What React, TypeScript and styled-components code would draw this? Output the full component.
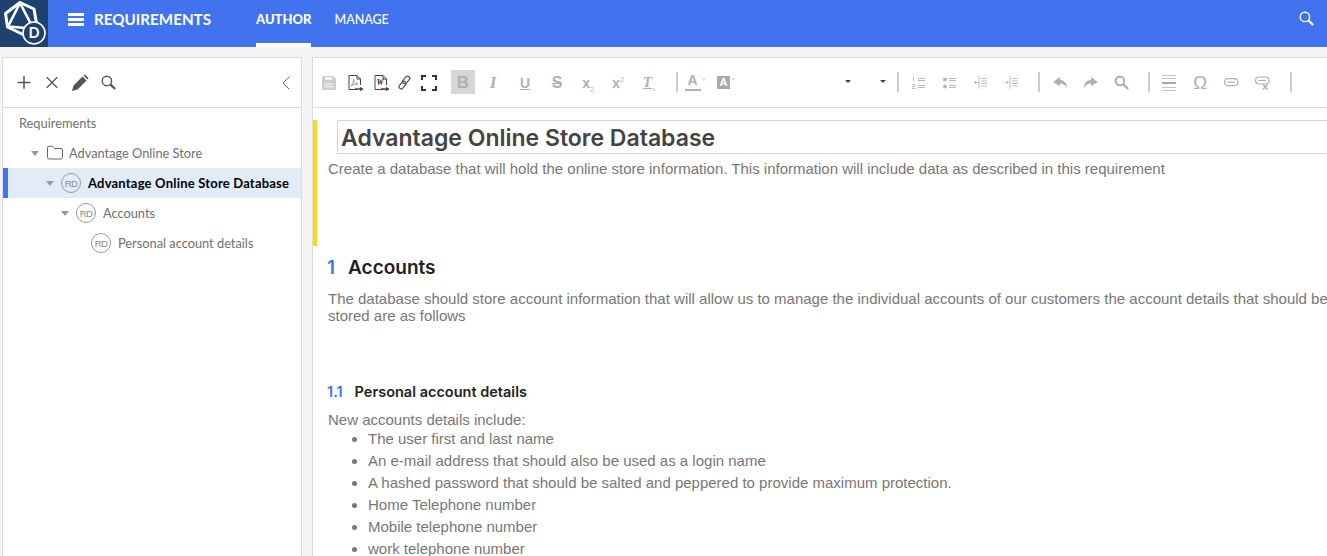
import React from 'react';
import styled, { createGlobalStyle } from 'styled-components';
import { Plus, X, ChevronLeft, Folder } from 'lucide-react';

const GlobalStyle = createGlobalStyle`
  html, body { margin: 0; padding: 0; height: 100%; overflow: hidden; background: #f5f5f5; }
  body { font-family: "Lato", "Liberation Sans", sans-serif; }
`;

const Page = styled.div`
  width: 1327px;
  height: 556px;
  overflow: hidden;
  display: flex;
  flex-direction: column;
`;

const Header = styled.header`
  height: 47px;
  flex: none;
  background: #4173ee;
  display: flex;
  align-items: center;
  color: #fff;
`;

const LogoBox = styled.div`
  width: 48px;
  height: 47px;
  background: #1f4170;
  flex: none;
`;

const MenuButton = styled.div`
  margin-left: 20px;
  width: 16px;
  display: flex;
  flex-direction: column;
  gap: 2px;
  padding-bottom: 8px;

  span {
    height: 3px;
    background: #fff;
  }
`;

const AppTitle = styled.div`
  margin-left: 10px;
  width: 162px;
  padding-bottom: 9px;
  font-size: 15.2px;
  font-weight: 700;
`;

const NavItem = styled.div<{ $active?: boolean }>`
  height: 47px;
  box-sizing: border-box;
  margin-right: 23px;
  font-size: ${(p) => (p.$active ? 13 : 12.5)}px;
  font-weight: ${(p) => (p.$active ? 900 : 500)};
  line-height: 39px;
  border-bottom: 4px solid ${(p) => (p.$active ? '#fff' : 'transparent')};
`;

const HeaderSearch = styled.div`
  margin-left: auto;
  margin-right: 13px;
  display: flex;
  padding-bottom: 11px;
`;

const Body = styled.main`
  flex: 1;
  display: flex;
  padding: 10px 0 0 2px;
  gap: 10px;
  min-height: 0;
`;

const TreePanel = styled.aside`
  width: 300px;
  flex: none;
  box-sizing: border-box;
  background: #fff;
  border: 1px solid #dcdcdc;
  border-bottom: 0;
`;

const TreeToolbar = styled.div`
  height: 50px;
  box-sizing: border-box;
  border-bottom: 1px solid #dcdcdc;
  display: flex;
  align-items: center;
  padding: 0 3px 0 11px;
  gap: 8px;
  color: #555;
`;

const TreeIcon = styled.span`
  width: 20px;
  display: flex;
  justify-content: center;
`;

const Collapse = styled.span`
  margin-left: auto;
  display: flex;
  color: #666;
`;

const Row = styled.div<{ $depth: number; $selected?: boolean }>`
  height: 30px;
  box-sizing: border-box;
  display: flex;
  align-items: center;
  padding-left: ${(p) => p.$depth}px;
  background: ${(p) => (p.$selected ? '#e2ecf9' : 'transparent')};
  border-left: 5px solid ${(p) => (p.$selected ? '#4173ee' : 'transparent')};
  font-size: ${(p) => (p.$selected ? 13 : 12.8)}px;
  letter-spacing: ${(p) => (p.$selected ? 0.2 : 0)}px;
  color: ${(p) => (p.$selected ? '#000' : '#707070')};
  font-weight: ${(p) => (p.$selected ? 700 : 400)};
`;

const Caret = styled.span`
  width: 0;
  height: 0;
  border-left: 4px solid transparent;
  border-right: 4px solid transparent;
  border-top: 5px solid #999;
  margin-right: 7px;
  flex: none;
`;

const Badge = styled.span`
  width: 20px;
  height: 20px;
  box-sizing: border-box;
  border: 1px solid #999;
  border-radius: 50%;
  display: flex;
  align-items: center;
  justify-content: center;
  margin-right: 7px;
  flex: none;
  font-family: "Liberation Sans", sans-serif;
  font-size: 9.5px;
  font-weight: 400;
  letter-spacing: -0.5px;
  color: #888;
`;

const FolderIcon = styled.span`
  display: flex;
  width: 18px;
  margin-right: 5px;
  color: #555;
`;

const EditorPanel = styled.section`
  width: 1100px;
  flex: none;
  background: #fff;
  border-left: 1px solid #dcdcdc;
  border-top: 1px solid #dcdcdc;
`;

const EditorToolbar = styled.div`
  height: 50px;
  box-sizing: border-box;
  border-bottom: 1px solid #dcdcdc;
  padding-bottom: 2px;
  display: flex;
  align-items: center;
`;

const Tool = styled.span<{ $ml: number; $active?: boolean; $dark?: boolean }>`
  width: 24px;
  height: 24px;
  box-sizing: border-box;
  padding-top: 2px;
  flex: none;
  margin-left: ${(p) => p.$ml}px;
  display: flex;
  align-items: center;
  justify-content: center;
  background: ${(p) => (p.$active ? '#d6d6d6' : 'transparent')};
  color: ${(p) => (p.$dark ? '#444' : '#b0b0b0')};
  font-family: "Liberation Sans", sans-serif;
`;

const Divider = styled.span<{ $ml: number }>`
  width: 2px;
  height: 20px;
  flex: none;
  background: #ccc;
  margin-left: ${(p) => p.$ml}px;
`;

const DropArrow = styled.span<{ $ml: number }>`
  width: 0;
  height: 0;
  flex: none;
  margin-left: ${(p) => p.$ml}px;
  border-left: 3px solid transparent;
  border-right: 3px solid transparent;
  border-top: 3px solid #444;
`;

const Doc = styled.div`
  padding: 12px 0 0 0;
  font-family: "Liberation Sans", sans-serif;
  font-size: 15px;
  color: #777;
`;

const RootSection = styled.div`
  height: 126px;
  border-left: 4px solid #f7da1e;
  box-sizing: border-box;
  padding-left: 11px;
`;

const TitleBox = styled.div`
  margin-left: 9px;
  height: 34px;
  box-sizing: border-box;
  border: 1px solid #d5d5d5;
  border-right: 0;
  padding-left: 3px;
  font-family: "Inter", sans-serif;
  font-size: 23px;
  font-weight: 600;
  line-height: 34px;
  color: #444;
`;

const Para = styled.p`
  margin: 0;
  line-height: 17px;
  padding-top: 6px;
`;

const Section = styled.div`
  padding-left: 15px;
`;

const H1 = styled.h1`
  margin: 12px 0 0 -1px;
  height: 20px;
  display: flex;
  align-items: center;
  gap: 13px;
  font-family: "Inter", sans-serif;
  font-size: 19px;
  font-weight: 600;
  line-height: 20px;
  color: #222;
`;

const H2 = styled.h2`
  margin: 58px 0 0 -1px;
  display: flex;
  gap: 12px;
  font-family: "Inter", sans-serif;
  font-size: 14.5px;
  font-weight: 600;
  line-height: 20px;
  color: #222;
`;

const Num = styled.span`
  color: #4173ee;
`;

const AccountBody = styled.p`
  margin: 12px 0 0;
  line-height: 17px;
  width: 1010px;
`;

const ListIntro = styled.p`
  margin: 9px 0 0;
  line-height: 17px;
`;

const List = styled.ul`
  margin: 0;
  padding: 0 0 0 40px;

  li {
    line-height: 22px;
  }
`;

const Logo = () => (
  <svg width="48" height="47" viewBox="0 0 48 47" fill="none" stroke="#fff">
    <path d="M20 2.5 L34 9 L37 26 L24 35 L7.5 27 L5.5 13.5 Z" strokeWidth="3" strokeLinejoin="round" />
    <path d="M20 3 L8 26.5 M20 3 L32 26 M8 26.5 L26 28" strokeWidth="2.6" />
    <circle cx="34" cy="33" r="11" fill="#1f4170" strokeWidth="1.6" />
    <text x="34" y="38" textAnchor="middle" fill="#fff" stroke="none" fontSize="14.5" fontWeight="700" fontFamily="Lato, sans-serif">D</text>
  </svg>
);

const Glass = ({ size, stroke = 'currentColor', heavy }: { size: number; stroke?: string; heavy?: boolean }) => (
  <svg width={size} height={size} viewBox="0 0 16 16" fill="none" stroke={stroke} strokeWidth={heavy ? 2.2 : 1.5}>
    <circle cx="6.3" cy="6.3" r={heavy ? 4.6 : 5} />
    <path d="M10 10 L15 15" strokeWidth="2.4" />
  </svg>
);

const Pencil = () => (
  <svg width="18" height="18" viewBox="0 0 18 18" fill="currentColor">
    <path d="M1 17 L2.5 11.5 L11.5 2.5 L15.5 6.5 L6.5 15.5 Z M12.5 1.5 L14 0.5 L17.5 4 L16.5 5.5 Z" />
  </svg>
);

const Save = () => (
  <svg width="14" height="14" viewBox="0 0 14 14" fill="#cfcfcf">
    <path d="M1 0 H11 L14 3 V14 H0 V1 Z" />
    <rect x="3" y="1" width="7" height="3" fill="#f2f2f2" />
    <rect x="2.5" y="7.5" width="9" height="1.3" fill="#f2f2f2" />
    <rect x="2.5" y="10" width="9" height="1.3" fill="#f2f2f2" />
  </svg>
);

const FileExport = ({ word }: { word?: boolean }) => (
  <svg width="15" height="16" viewBox="0 0 15 16" fill="none" stroke="#444">
    <path d="M9 14.5 H1 V.5 H9 L12.5 4 V10" />
    <path d="M9 .5 V4 H12.5" />
    <path d="M7 14 H14 M12 12.5 L14.5 14 L12 15.5" strokeWidth="1.4" />
    {word ? (
      <text x="6" y="10" textAnchor="middle" fontSize="8" fontWeight="700" fontStyle="italic" fill="#222" stroke="none" fontFamily="Liberation Serif, serif">W</text>
    ) : (
      <path d="M3 11 C5 9 6 5 5.5 4 C5 5 7 9 10 9 C8 8.5 5 9.5 3 11 Z" strokeWidth=".7" stroke="#777" />
    )}
  </svg>
);

const LinkIcon = () => (
  <svg width="15" height="15" viewBox="0 0 14 14" fill="none" stroke="#555" strokeWidth="1.2">
    <rect x="6.6" y="0.6" width="4" height="8" rx="2" transform="rotate(40 8.6 4.6)" />
    <rect x="3.2" y="5.4" width="4" height="8" rx="2" transform="rotate(40 5.2 9.4)" />
  </svg>
);

const Fullscreen = () => (
  <svg width="16" height="16" viewBox="0 0 16 16" fill="none" stroke="#333" strokeWidth="2">
    <path d="M1 5 V1 H5 M11 1 H15 V5 M15 11 V15 H11 M5 15 H1 V11" />
  </svg>
);

const Glyph = styled.span<{ $size?: number; $bold?: boolean; $italic?: boolean; $under?: boolean; $strike?: boolean; $serif?: boolean }>`
  font-size: ${(p) => p.$size ?? 15}px;
  font-weight: ${(p) => (p.$bold ? 700 : 400)};
  font-style: ${(p) => (p.$italic ? 'italic' : 'normal')};
  text-decoration: ${(p) => (p.$under ? 'underline' : p.$strike ? 'line-through' : 'none')};
  font-family: ${(p) => (p.$serif ? '"Liberation Serif", serif' : '"Liberation Sans", sans-serif')};
  line-height: 1;

  sub, sup {
    font-size: 7px;
    line-height: 0;
    font-weight: 400;
  }
`;

const TextColor = styled.span`
  display: flex;
  flex-direction: column;
  align-items: center;
  font-size: 14px;
  font-weight: 700;
  line-height: 13px;
  color: #b0b0b0;

  &::after {
    content: '';
    width: 16px;
    height: 2px;
    margin-top: 2px;
    background: #b0b0b0;
  }
`;

const BgColor = styled.span`
  width: 13px;
  height: 13px;
  background: #aaa;
  color: #fff;
  font-size: 11px;
  font-weight: 700;
  line-height: 13px;
  text-align: center;
`;

const MiniCaret = styled.span`
  width: 0;
  height: 0;
  margin: -6px 0 0 1px;
  border-left: 2.5px solid transparent;
  border-right: 2.5px solid transparent;
  border-top: 3px solid #ddd;
`;

const ListLines = ({ kind }: { kind: 'ol' | 'ul' | 'out' | 'in' }) => (
  <svg width="13" height="13" viewBox="0 0 13 13" fill="none" stroke="#b8b8b8">
    {kind === 'ol' || kind === 'ul' ? (
      <>
        <path d="M6 2.5 H13 M6 4.5 H13 M6 9.5 H13 M6 11.5 H13" />
        {kind === 'ul' ? (
          <>
            <circle cx="2" cy="3.5" r="2" fill="#b8b8b8" stroke="none" />
            <circle cx="2" cy="10.5" r="2" fill="#b8b8b8" stroke="none" />
          </>
        ) : (
          <path d="M1.5 1 V5.5 M0 8.5 H3 V10.5 H0 V12.5 H3.5" strokeWidth=".9" />
        )}
      </>
    ) : (
      <>
        <path d="M7 2.5 H13 M7 5 H13 M7 7.5 H13 M7 10 H13 M5 0 V13" strokeWidth=".9" />
        <path d={kind === 'out' ? 'M0 6.5 H3.5 M2 5 L.5 6.5 L2 8' : 'M0 6.5 H3.5 M2 5 L3.5 6.5 L2 8'} strokeWidth=".9" />
      </>
    )}
  </svg>
);

const Arrow = ({ flip }: { flip?: boolean }) => (
  <svg width="15" height="13" viewBox="0 0 15 13" fill="#b0b0b0" style={flip ? { transform: 'scaleX(-1)' } : undefined}>
    <path d="M7 1 L0 6 L7 10 V7.5 C10 7.5 12.5 9 14 12 C14 7.5 11 4 7 4 Z" />
  </svg>
);

const HrIcon = () => (
  <svg width="14" height="16" viewBox="0 0 14 16" stroke="#c4c4c4">
    <path d="M0 .5 H14 M0 3.5 H14 M0 12.5 H14 M0 15.5 H14" />
    <path d="M0 8 H14" strokeWidth="2" stroke="#aaa" />
  </svg>
);

const ChainIcon = ({ broken }: { broken?: boolean }) => (
  <svg width="15" height="15" viewBox="0 0 15 15" fill="none" stroke="#b0b0b0" strokeWidth="1.2">
    <rect x=".6" y={broken ? 2 : 3.6} width="13.4" height="7" rx="3.5" />
    <path d={broken ? 'M3.5 5.5 H11' : 'M3.5 7.1 H11'} />
    {broken && <path d="M8 9.5 L12.5 14.5 M12.5 9.5 L8 14.5" strokeWidth="1.5" />}
  </svg>
);

const App: React.FC = () => (
  <Page>
    <GlobalStyle />
    <Header>
      <LogoBox><Logo /></LogoBox>
      <MenuButton><span /><span /><span /></MenuButton>
      <AppTitle>REQUIREMENTS</AppTitle>
      <NavItem $active>AUTHOR</NavItem>
      <NavItem>MANAGE</NavItem>
      <HeaderSearch><Glass size={15} /></HeaderSearch>
    </Header>
    <Body>
      <TreePanel>
        <TreeToolbar>
          <TreeIcon><Plus size={23} strokeWidth={1.8} /></TreeIcon>
          <TreeIcon><X size={21} strokeWidth={1.4} /></TreeIcon>
          <TreeIcon><Pencil /></TreeIcon>
          <TreeIcon><Glass size={15} /></TreeIcon>
          <Collapse><ChevronLeft size={24} strokeWidth={1} /></Collapse>
        </TreeToolbar>
        <div>
          <Row $depth={11}>Requirements</Row>
          <Row $depth={23}><Caret /><FolderIcon><Folder size={18} strokeWidth={1.2} /></FolderIcon>Advantage Online Store</Row>
          <Row $depth={38} $selected><Caret /><Badge>RD</Badge>Advantage Online Store Database</Row>
          <Row $depth={53}><Caret /><Badge>RD</Badge>Accounts</Row>
          <Row $depth={83}><Badge>RD</Badge>Personal account details</Row>
        </div>
      </TreePanel>
      <EditorPanel>
        <EditorToolbar>
          <Tool $ml={4}><Save /></Tool>
          <Tool $ml={2} $dark><FileExport /></Tool>
          <Tool $ml={2} $dark><FileExport word /></Tool>
          <Tool $ml={-1} $dark><LinkIcon /></Tool>
          <Tool $ml={1} $dark><Fullscreen /></Tool>
          <Tool $ml={10} $active><Glyph $bold $size={17}>B</Glyph></Tool>
          <Tool $ml={6}><Glyph $italic $bold $serif $size={17}>I</Glyph></Tool>
          <Tool $ml={8}><Glyph $under $bold $size={14}>U</Glyph></Tool>
          <Tool $ml={8}><Glyph $strike $bold $size={16}>S</Glyph></Tool>
          <Tool $ml={7}><Glyph $bold $size={14}>x<sub>2</sub></Glyph></Tool>
          <Tool $ml={6}><Glyph $bold $size={14}>x<sup>2</sup></Glyph></Tool>
          <Tool $ml={7}><Glyph $italic $under $bold $serif $size={15}>T<sub>x</sub></Glyph></Tool>
          <Divider $ml={15} />
          <Tool $ml={5}><TextColor>A</TextColor><MiniCaret /></Tool>
          <Tool $ml={7}><BgColor>A</BgColor><MiniCaret /></Tool>
          <DropArrow $ml={107} />
          <DropArrow $ml={29} />
          <Divider $ml={11} />
          <Tool $ml={7}><ListLines kind="ol" /></Tool>
          <Tool $ml={7}><ListLines kind="ul" /></Tool>
          <Tool $ml={7}><ListLines kind="out" /></Tool>
          <Tool $ml={7}><ListLines kind="in" /></Tool>
          <Divider $ml={15} />
          <Tool $ml={8}><Arrow /></Tool>
          <Tool $ml={6}><Arrow flip /></Tool>
          <Tool $ml={7}><Glass size={15} heavy /></Tool>
          <Divider $ml={15} />
          <Tool $ml={7}><HrIcon /></Tool>
          <Tool $ml={7}><Glyph $size={19}>Ω</Glyph></Tool>
          <Tool $ml={7}><ChainIcon /></Tool>
          <Tool $ml={7}><ChainIcon broken /></Tool>
          <Divider $ml={16} />
        </EditorToolbar>
        <Doc>
          <RootSection>
            <TitleBox>Advantage Online Store Database</TitleBox>
            <Para>Create a database that will hold the online store information. This information will include data as described in this requirement</Para>
          </RootSection>
          <Section>
            <H1><Num>1</Num>Accounts</H1>
            <AccountBody>The database should store account information that will allow us to manage the individual accounts of our customers the account details that should be stored are as follows</AccountBody>
            <H2><Num>1.1</Num>Personal account details</H2>
            <ListIntro>New accounts details include:</ListIntro>
            <List>
              <li>The user first and last name</li>
              <li>An e-mail address that should also be used as a login name</li>
              <li>A hashed password that should be salted and peppered to provide maximum protection.</li>
              <li>Home Telephone number</li>
              <li>Mobile telephone number</li>
              <li>work telephone number</li>
            </List>
          </Section>
        </Doc>
      </EditorPanel>
    </Body>
  </Page>
);

export default App;
